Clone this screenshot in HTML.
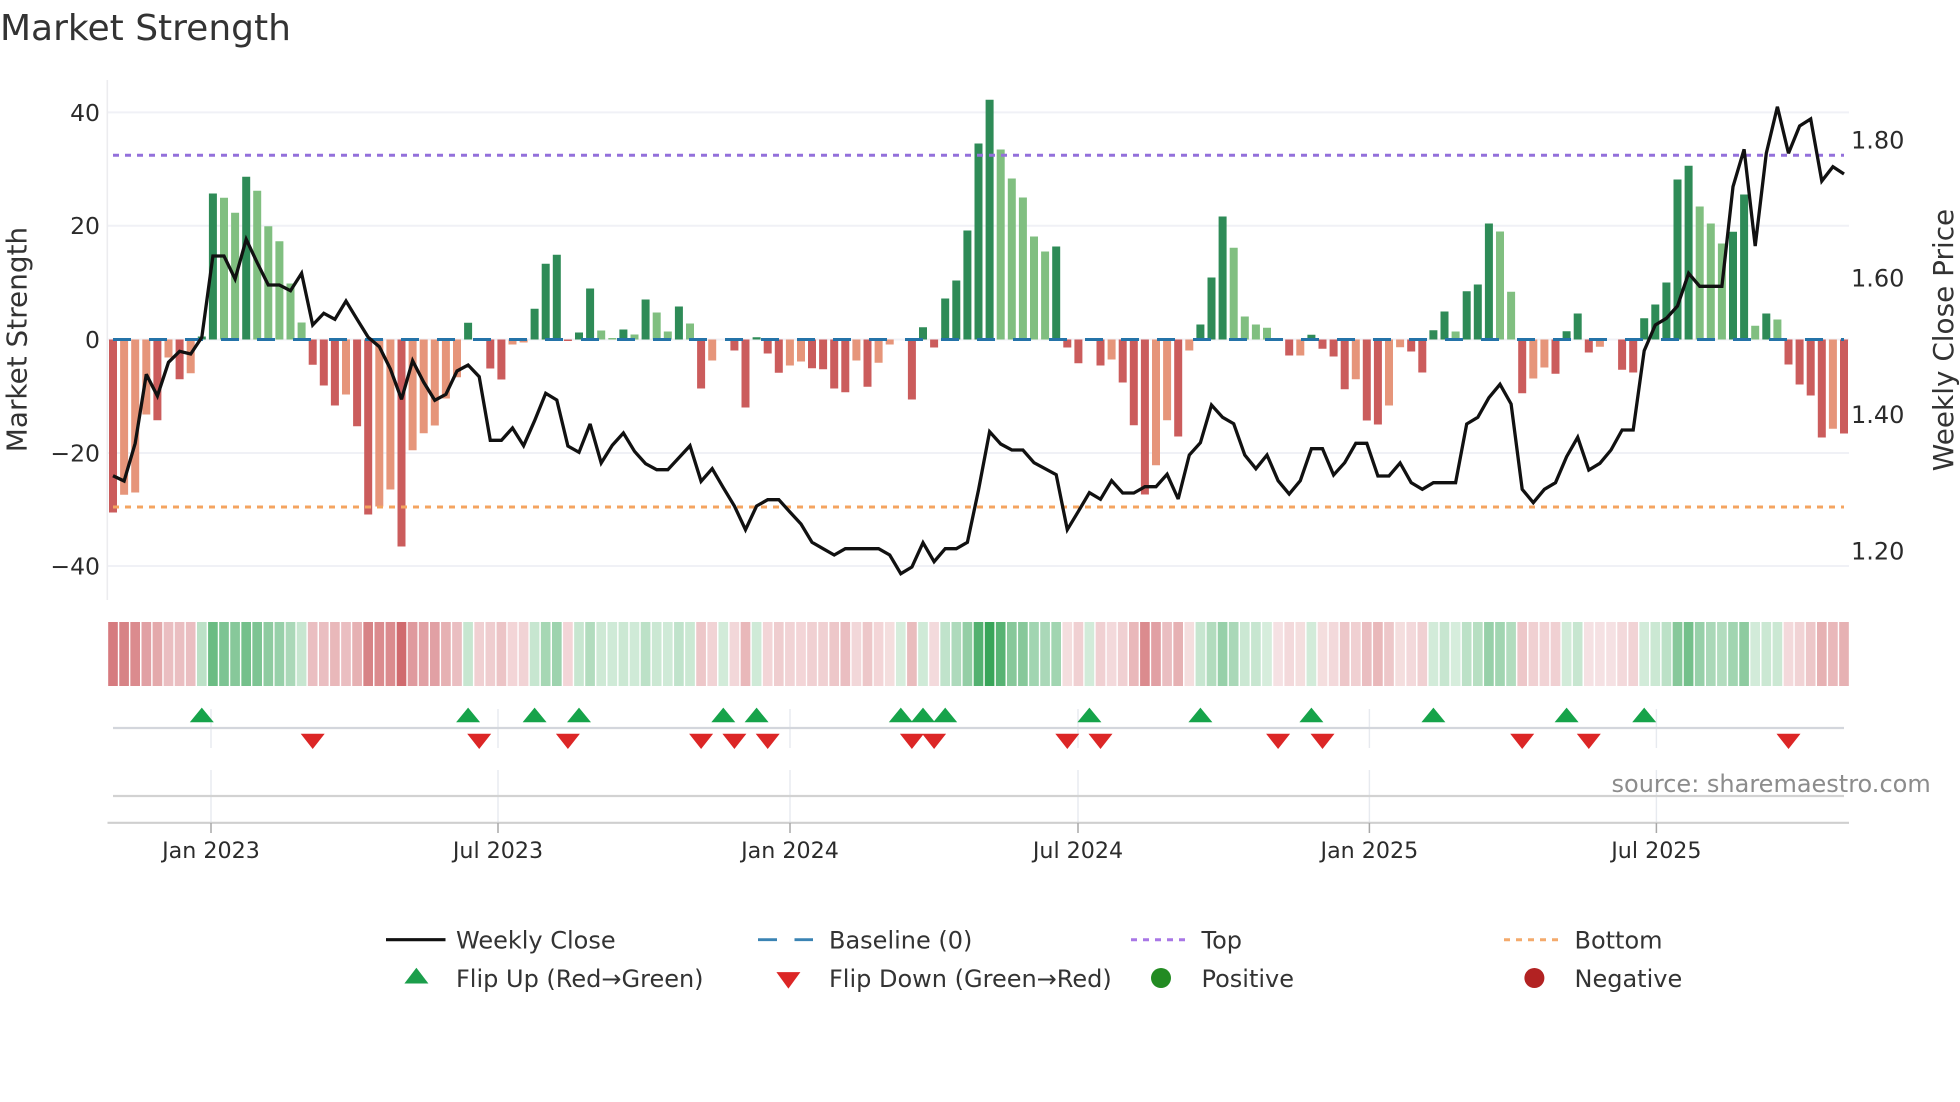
<!DOCTYPE html>
<html lang="en">
<head>
<meta charset="utf-8">
<title>Market Strength</title>
<style>
html,body{margin:0;padding:0;background:#fff;width:1960px;height:1102px;overflow:hidden}
svg{display:block}
text{font-family:"DejaVu Sans","Liberation Sans",sans-serif;fill:#2b2b2b}
.t{font-size:22.2px}
.yl{font-size:23.5px}
.yr{font-size:24px}
.l{font-size:24px;fill:#333}
.a{font-size:27.9px;fill:#333}
.g{stroke:#2da050;stroke-width:9.6;fill:none}
.r{stroke:#c85055;stroke-width:9.6;fill:none}
</style>
</head>
<body>
<svg width="1960" height="1102" viewBox="0 0 1960 1102" xmlns="http://www.w3.org/2000/svg">
<defs>
<filter id="lift" filterUnits="userSpaceOnUse" x="100" y="618" width="1760" height="72" color-interpolation-filters="sRGB">
<feComponentTransfer><feFuncA type="table" tableValues="0 .17 .27 .37 .45 .54 .62 .71 .8 .9 1"/></feComponentTransfer>
</filter>
</defs>
<rect width="1960" height="1102" fill="#fff"/>
<text x="0" y="40" style="font-size:36px;fill:#333">Market Strength</text>

<!-- grid -->
<path d="M107 112.4H1849M107 225.8H1849M107 339.5H1849M107 453H1849M107 566H1849" stroke="#f0f1f6" stroke-width="2" fill="none"/>
<path d="M107.3 80V600" stroke="#ececef" stroke-width="1.6" fill="none"/>

<!-- bars -->
<path fill="none" stroke="#2e8b57" stroke-width="8" d="M201.8 339.5v-3M212.9 339.5v-146M246.2 339.5v-162.7M468.1 339.5v-16.7M534.6 339.5v-30.7M545.7 339.5v-75.7M556.8 339.5v-84.7M579 339.5v-7M590.1 339.5v-51M623.4 339.5v-10M645.6 339.5v-40M678.9 339.5v-33M756.6 339.5v-2.3M923 339.5v-12.3M945.2 339.5v-41M956.3 339.5v-59M967.4 339.5v-109M978.5 339.5v-196M989.6 339.5v-239.7M1056.2 339.5v-93M1200.4 339.5v-15M1211.5 339.5v-62M1222.6 339.5v-123M1311.4 339.5v-4.7M1433.4 339.5v-9.3M1444.5 339.5v-28M1466.7 339.5v-48.3M1477.8 339.5v-55M1488.9 339.5v-116M1566.6 339.5v-8.3M1577.7 339.5v-26M1644.2 339.5v-21.3M1655.3 339.5v-35M1666.4 339.5v-57M1677.5 339.5v-160M1688.6 339.5v-173.7M1733 339.5v-107.7M1744.1 339.5v-145M1766.3 339.5v-26"/>
<path fill="none" stroke="#80bf80" stroke-width="8" d="M224 339.5v-141.7M235.1 339.5v-126.7M257.2 339.5v-148.7M268.3 339.5v-113.3M279.4 339.5v-98.3M290.5 339.5v-56M301.6 339.5v-17M601.2 339.5v-9M612.3 339.5v-1.5M634.5 339.5v-5M656.7 339.5v-27M667.8 339.5v-8M690 339.5v-16M1000.7 339.5v-190M1011.8 339.5v-161M1022.9 339.5v-142M1034 339.5v-103M1045.1 339.5v-88M1233.7 339.5v-91.7M1244.8 339.5v-23M1255.9 339.5v-15M1267 339.5v-11.7M1455.6 339.5v-8M1500 339.5v-108M1511.1 339.5v-47.7M1699.7 339.5v-133M1710.8 339.5v-116M1721.9 339.5v-96M1755.2 339.5v-13.7M1777.4 339.5v-20"/>
<path fill="none" stroke="#cb5c5c" stroke-width="8" d="M113 339.5v173M157.4 339.5v80.7M179.6 339.5v39.7M312.7 339.5v25.3M323.8 339.5v46M334.9 339.5v66M357.1 339.5v86.7M368.2 339.5v175M401.5 339.5v207M490.3 339.5v29M501.4 339.5v40M567.9 339.5v1.5M701.1 339.5v49M734.4 339.5v11M745.5 339.5v68M767.7 339.5v14M778.8 339.5v33.3M812 339.5v28.7M823.1 339.5v29.7M834.2 339.5v49M845.3 339.5v52.7M867.5 339.5v47.3M911.9 339.5v60M934.1 339.5v8M1067.3 339.5v8M1078.4 339.5v23.7M1100.5 339.5v26M1122.7 339.5v43M1133.8 339.5v85.7M1144.9 339.5v155M1178.2 339.5v97M1289.2 339.5v16M1322.5 339.5v9.3M1333.6 339.5v17M1344.7 339.5v49.7M1366.8 339.5v81M1377.9 339.5v85M1411.2 339.5v12M1422.3 339.5v33M1522.2 339.5v53.7M1555.5 339.5v34.3M1588.8 339.5v13M1622.1 339.5v30.3M1633.2 339.5v33M1788.5 339.5v25M1799.6 339.5v45M1810.7 339.5v56M1821.8 339.5v98M1844 339.5v94"/>
<path fill="none" stroke="#e6957a" stroke-width="8" d="M124.1 339.5v155.3M135.2 339.5v153M146.3 339.5v75M168.5 339.5v18M190.7 339.5v33.7M346 339.5v55M379.3 339.5v167M390.4 339.5v150M412.6 339.5v110.7M423.7 339.5v93.7M434.8 339.5v86M445.9 339.5v59M457 339.5v37.7M512.5 339.5v5M523.6 339.5v3M712.2 339.5v21M789.9 339.5v26M801 339.5v22M856.4 339.5v21M878.6 339.5v23.3M889.7 339.5v5M1111.6 339.5v20M1156 339.5v125.7M1167.1 339.5v80.7M1189.3 339.5v11M1300.3 339.5v16M1355.8 339.5v39.7M1389 339.5v66M1400.1 339.5v7.7M1533.3 339.5v39M1544.4 339.5v28M1599.9 339.5v7.3M1832.9 339.5v89.3"/>

<!-- reference lines -->
<path d="M113 339.5H1844" stroke="#2473a8" stroke-width="3" stroke-dasharray="18 18" fill="none"/>
<path d="M113 155.3H1844" stroke="#9370db" stroke-width="3" stroke-dasharray="6 6" fill="none"/>
<path d="M113 507H1844" stroke="#f4a460" stroke-width="3" stroke-dasharray="6 6" fill="none"/>

<!-- weekly close -->
<polyline fill="none" stroke="#111" stroke-width="3.3" stroke-linejoin="miter" stroke-miterlimit="3" points="113,475.7 124.1,481 135.2,443.3 146.3,374.3 157.4,396 168.5,362.3 179.6,351.3 190.7,354 201.8,337.3 212.9,256 224,256 235.1,279 246.2,239.3 257.2,262.7 268.3,285 279.4,285 290.5,290.7 301.6,273.3 312.7,325 323.8,313.3 334.9,319.3 346,301 357.1,319.3 368.2,337.3 379.3,346.7 390.4,369 401.5,399.3 412.6,360.7 423.7,382.3 434.8,400.3 445.9,394.3 457,371 468.1,365 479.2,376.7 490.3,440.3 501.4,440.3 512.5,428 523.6,445.7 534.6,420.7 545.7,393.3 556.8,400 567.9,446 579,452.3 590.1,424 601.2,463 612.3,445.3 623.4,433 634.5,451.3 645.6,463.7 656.7,469.7 667.8,469.7 678.9,457.7 690,445.7 701.1,481.3 712.2,468.7 723.3,487.7 734.4,506 745.5,529.7 756.6,506 767.7,499.7 778.8,499.7 789.9,512 801,524 812,542.3 823.1,548.7 834.2,555 845.3,548.7 856.4,548.7 867.5,548.7 878.6,548.7 889.7,555 900.8,573.7 911.9,567 923,542.7 934.1,561.7 945.2,548.7 956.3,548.7 967.4,542.3 978.5,490 989.6,431.7 1000.7,444 1011.8,450 1022.9,450 1034,462.7 1045.1,468.7 1056.2,474.7 1067.3,529.7 1078.4,511.3 1089.4,492.7 1100.5,499.3 1111.6,480.7 1122.7,493 1133.8,493 1144.9,486.7 1156,486.7 1167.1,474.3 1178.2,499 1189.3,455 1200.4,442.7 1211.5,405 1222.6,417.3 1233.7,423.7 1244.8,455 1255.9,468.7 1267,455 1278.1,480.7 1289.2,494 1300.3,480.7 1311.4,448.7 1322.5,448.7 1333.6,475 1344.7,462.7 1355.8,443.3 1366.8,443.3 1377.9,476 1389,476 1400.1,463 1411.2,482.7 1422.3,489.3 1433.4,482.7 1444.5,482.7 1455.6,482.7 1466.7,424 1477.8,417.3 1488.9,397.7 1500,384.3 1511.1,404 1522.2,489.3 1533.3,502.7 1544.4,489.3 1555.5,482.7 1566.6,456.7 1577.7,437.3 1588.8,470 1599.9,463.3 1611,450 1622.1,430 1633.2,430 1644.2,350.7 1655.3,325 1666.4,318.3 1677.5,306 1688.6,273.3 1699.7,286.3 1710.8,286.3 1721.9,286.3 1733,186.7 1744.1,149.3 1755.2,246 1766.3,153.3 1777.4,106.7 1788.5,153.3 1799.6,126 1810.7,119 1821.8,181 1832.9,166.7 1844,174"/>

<!-- y ticks -->
<g text-anchor="end">
<text class="yl" x="100" y="120.8">40</text>
<text class="yl" x="100" y="234">20</text>
<text class="yl" x="100" y="347.8">0</text>
<text class="yl" x="100" y="461.3">−20</text>
<text class="yl" x="100" y="574.3">−40</text>
</g>
<text class="yr" x="1851" y="148.7">1.80</text>
<text class="yr" x="1851" y="286.3">1.60</text>
<text class="yr" x="1851" y="423">1.40</text>
<text class="yr" x="1851" y="559.7">1.20</text>
<text class="a" text-anchor="middle" transform="translate(26.5 339.5) rotate(-90)">Market Strength</text>
<text class="a" text-anchor="middle" transform="translate(1953 340) rotate(-90)">Weekly Close Price</text>

<!-- heat strip -->
<g filter="url(#lift)">
<path class="r" opacity=".75" d="M113 622v64"/><path class="r" opacity=".7" d="M124.1 622v64"/><path class="r" opacity=".65" d="M135.2 622v64"/><path class="r" opacity=".5" d="M146.3 622v64"/><path class="r" opacity=".45" d="M157.4 622v64"/><path class="r" opacity=".3" d="M168.5 622v64"/><path class="r" opacity=".3" d="M179.6 622v64"/><path class="r" opacity=".3" d="M190.7 622v64"/><path class="g" opacity=".25" d="M201.8 622v64"/><path class="g" opacity=".7" d="M212.9 622v64"/>
<path class="g" opacity=".6" d="M224 622v64"/><path class="g" opacity=".55" d="M235.1 622v64"/><path class="g" opacity=".65" d="M246.2 622v64"/><path class="g" opacity=".6" d="M257.2 622v64"/><path class="g" opacity=".5" d="M268.3 622v64"/><path class="g" opacity=".45" d="M279.4 622v64"/><path class="g" opacity=".35" d="M290.5 622v64"/><path class="g" opacity=".2" d="M301.6 622v64"/><path class="r" opacity=".3" d="M312.7 622v64"/><path class="r" opacity=".3" d="M323.8 622v64"/>
<path class="r" opacity=".35" d="M334.9 622v64"/><path class="r" opacity=".3" d="M346 622v64"/><path class="r" opacity=".4" d="M357.1 622v64"/><path class="r" opacity=".7" d="M368.2 622v64"/><path class="r" opacity=".65" d="M379.3 622v64"/><path class="r" opacity=".65" d="M390.4 622v64"/><path class="r" opacity=".85" d="M401.5 622v64"/><path class="r" opacity=".55" d="M412.6 622v64"/><path class="r" opacity=".5" d="M423.7 622v64"/><path class="r" opacity=".5" d="M434.8 622v64"/>
<path class="r" opacity=".4" d="M445.9 622v64"/><path class="r" opacity=".3" d="M457 622v64"/><path class="g" opacity=".2" d="M468.1 622v64"/><path class="r" opacity=".2" d="M479.2 622v64"/><path class="r" opacity=".22" d="M490.3 622v64"/><path class="r" opacity=".27" d="M501.4 622v64"/><path class="r" opacity=".17" d="M512.5 622v64"/><path class="r" opacity=".18" d="M523.6 622v64"/><path class="g" opacity=".2" d="M534.6 622v64"/><path class="g" opacity=".37" d="M545.7 622v64"/>
<path class="g" opacity=".42" d="M556.8 622v64"/><path class="r" opacity=".17" d="M567.9 622v64"/><path class="g" opacity=".2" d="M579 622v64"/><path class="g" opacity=".3" d="M590.1 622v64"/><path class="g" opacity=".17" d="M601.2 622v64"/><path class="g" opacity=".16" d="M612.3 622v64"/><path class="g" opacity=".18" d="M623.4 622v64"/><path class="g" opacity=".16" d="M634.5 622v64"/><path class="g" opacity=".25" d="M645.6 622v64"/><path class="g" opacity=".18" d="M656.7 622v64"/>
<path class="g" opacity=".16" d="M667.8 622v64"/><path class="g" opacity=".23" d="M678.9 622v64"/><path class="g" opacity=".18" d="M690 622v64"/><path class="r" opacity=".25" d="M701.1 622v64"/><path class="r" opacity=".18" d="M712.2 622v64"/><path class="g" opacity=".15" d="M723.3 622v64"/><path class="r" opacity=".16" d="M734.4 622v64"/><path class="r" opacity=".35" d="M745.5 622v64"/><path class="g" opacity=".16" d="M756.6 622v64"/><path class="r" opacity=".17" d="M767.7 622v64"/>
<path class="r" opacity=".22" d="M778.8 622v64"/><path class="r" opacity=".18" d="M789.9 622v64"/><path class="r" opacity=".17" d="M801 622v64"/><path class="r" opacity=".2" d="M812 622v64"/><path class="r" opacity=".2" d="M823.1 622v64"/><path class="r" opacity=".25" d="M834.2 622v64"/><path class="r" opacity=".3" d="M845.3 622v64"/><path class="r" opacity=".16" d="M856.4 622v64"/><path class="r" opacity=".25" d="M867.5 622v64"/><path class="r" opacity=".17" d="M878.6 622v64"/>
<path class="r" opacity=".12" d="M889.7 622v64"/><path class="g" opacity=".13" d="M900.8 622v64"/><path class="r" opacity=".32" d="M911.9 622v64"/><path class="g" opacity=".16" d="M923 622v64"/><path class="r" opacity=".14" d="M934.1 622v64"/><path class="g" opacity=".23" d="M945.2 622v64"/><path class="g" opacity=".32" d="M956.3 622v64"/><path class="g" opacity=".47" d="M967.4 622v64"/><path class="g" opacity=".82" d="M978.5 622v64"/><path class="g" opacity=".95" d="M989.6 622v64"/>
<path class="g" opacity=".8" d="M1000.7 622v64"/><path class="g" opacity=".55" d="M1011.8 622v64"/><path class="g" opacity=".55" d="M1022.9 622v64"/><path class="g" opacity=".4" d="M1034 622v64"/><path class="g" opacity=".35" d="M1045.1 622v64"/><path class="g" opacity=".4" d="M1056.2 622v64"/><path class="r" opacity=".12" d="M1067.3 622v64"/><path class="r" opacity=".2" d="M1078.4 622v64"/><path class="g" opacity=".15" d="M1089.4 622v64"/><path class="r" opacity=".2" d="M1100.5 622v64"/>
<path class="r" opacity=".15" d="M1111.6 622v64"/><path class="r" opacity=".2" d="M1122.7 622v64"/><path class="r" opacity=".35" d="M1133.8 622v64"/><path class="r" opacity=".65" d="M1144.9 622v64"/><path class="r" opacity=".5" d="M1156 622v64"/><path class="r" opacity=".3" d="M1167.1 622v64"/><path class="r" opacity=".4" d="M1178.2 622v64"/><path class="r" opacity=".12" d="M1189.3 622v64"/><path class="g" opacity=".2" d="M1200.4 622v64"/><path class="g" opacity=".3" d="M1211.5 622v64"/>
<path class="g" opacity=".45" d="M1222.6 622v64"/><path class="g" opacity=".35" d="M1233.7 622v64"/><path class="g" opacity=".18" d="M1244.8 622v64"/><path class="g" opacity=".2" d="M1255.9 622v64"/><path class="g" opacity=".13" d="M1267 622v64"/><path class="r" opacity=".1" d="M1278.1 622v64"/><path class="r" opacity=".15" d="M1289.2 622v64"/><path class="r" opacity=".12" d="M1300.3 622v64"/><path class="g" opacity=".15" d="M1311.4 622v64"/><path class="r" opacity=".12" d="M1322.5 622v64"/>
<path class="r" opacity=".15" d="M1333.6 622v64"/><path class="r" opacity=".25" d="M1344.7 622v64"/><path class="r" opacity=".2" d="M1355.8 622v64"/><path class="r" opacity=".3" d="M1366.8 622v64"/><path class="r" opacity=".35" d="M1377.9 622v64"/><path class="r" opacity=".25" d="M1389 622v64"/><path class="r" opacity=".12" d="M1400.1 622v64"/><path class="r" opacity=".15" d="M1411.2 622v64"/><path class="r" opacity=".2" d="M1422.3 622v64"/><path class="g" opacity=".15" d="M1433.4 622v64"/>
<path class="g" opacity=".2" d="M1444.5 622v64"/><path class="g" opacity=".13" d="M1455.6 622v64"/><path class="g" opacity=".25" d="M1466.7 622v64"/><path class="g" opacity=".28" d="M1477.8 622v64"/><path class="g" opacity=".45" d="M1488.9 622v64"/><path class="g" opacity=".4" d="M1500 622v64"/><path class="g" opacity=".3" d="M1511.1 622v64"/><path class="r" opacity=".25" d="M1522.2 622v64"/><path class="r" opacity=".2" d="M1533.3 622v64"/><path class="r" opacity=".18" d="M1544.4 622v64"/>
<path class="r" opacity=".2" d="M1555.5 622v64"/><path class="g" opacity=".15" d="M1566.6 622v64"/><path class="g" opacity=".2" d="M1577.7 622v64"/><path class="r" opacity=".1" d="M1588.8 622v64"/><path class="r" opacity=".1" d="M1599.9 622v64"/><path class="r" opacity=".1" d="M1611 622v64"/><path class="r" opacity=".15" d="M1622.1 622v64"/><path class="r" opacity=".18" d="M1633.2 622v64"/><path class="g" opacity=".15" d="M1644.2 622v64"/><path class="g" opacity=".18" d="M1655.3 622v64"/>
<path class="g" opacity=".25" d="M1666.4 622v64"/><path class="g" opacity=".55" d="M1677.5 622v64"/><path class="g" opacity=".65" d="M1688.6 622v64"/><path class="g" opacity=".45" d="M1699.7 622v64"/><path class="g" opacity=".35" d="M1710.8 622v64"/><path class="g" opacity=".3" d="M1721.9 622v64"/><path class="g" opacity=".4" d="M1733 622v64"/><path class="g" opacity=".5" d="M1744.1 622v64"/><path class="g" opacity=".15" d="M1755.2 622v64"/><path class="g" opacity=".18" d="M1766.3 622v64"/>
<path class="g" opacity=".18" d="M1777.4 622v64"/><path class="r" opacity=".15" d="M1788.5 622v64"/><path class="r" opacity=".18" d="M1799.6 622v64"/><path class="r" opacity=".25" d="M1810.7 622v64"/><path class="r" opacity=".4" d="M1821.8 622v64"/><path class="r" opacity=".35" d="M1832.9 622v64"/><path class="r" opacity=".4" d="M1844 622v64"/>
</g>

<!-- flip lane grid -->
<path d="M211 709V748M498 709V748M790 709V748M1078 709V748M1369.4 709V748M1656.4 709V748M211 770V822M498 770V822M790 770V822M1078 770V822M1369.4 770V822M1656.4 770V822" stroke="#e7eaef" stroke-width="1.4" fill="none"/>
<path d="M113 728H1844" stroke="#d3d6dc" stroke-width="2.2" fill="none"/>
<path d="M113 796H1844" stroke="#d2d2d2" stroke-width="2.2" fill="none"/>
<path d="M107.5 822.8H1849" stroke="#cfcfcf" stroke-width="2.2" fill="none"/>
<path d="M211 823V833M498 823V833M790 823V833M1078 823V833M1369.4 823V833M1656.4 823V833" stroke="#a8a8a8" stroke-width="1.5" fill="none"/>

<!-- flips -->
<path fill="#16a34a" d="M201.8 707.6l12 14.7h-24zM468.1 707.6l12 14.7h-24zM534.6 707.6l12 14.7h-24zM579 707.6l12 14.7h-24zM723.3 707.6l12 14.7h-24zM756.6 707.6l12 14.7h-24zM900.8 707.6l12 14.7h-24zM923 707.6l12 14.7h-24zM945.2 707.6l12 14.7h-24zM1089.4 707.6l12 14.7h-24zM1200.4 707.6l12 14.7h-24zM1311.4 707.6l12 14.7h-24zM1433.4 707.6l12 14.7h-24zM1566.6 707.6l12 14.7h-24zM1644.2 707.6l12 14.7h-24z"/>
<path fill="#dc2626" d="M312.7 749l-12-15.2h24zM479.2 749l-12-15.2h24zM567.9 749l-12-15.2h24zM701.1 749l-12-15.2h24zM734.4 749l-12-15.2h24zM767.7 749l-12-15.2h24zM911.9 749l-12-15.2h24zM934.1 749l-12-15.2h24zM1067.3 749l-12-15.2h24zM1100.5 749l-12-15.2h24zM1278.1 749l-12-15.2h24zM1322.5 749l-12-15.2h24zM1522.2 749l-12-15.2h24zM1588.8 749l-12-15.2h24zM1788.5 749l-12-15.2h24z"/>

<!-- x labels -->
<text class="t" text-anchor="middle" x="211" y="858">Jan 2023</text>
<text class="t" text-anchor="middle" x="498" y="858">Jul 2023</text>
<text class="t" text-anchor="middle" x="790" y="858">Jan 2024</text>
<text class="t" text-anchor="middle" x="1078" y="858">Jul 2024</text>
<text class="t" text-anchor="middle" x="1369.4" y="858">Jan 2025</text>
<text class="t" text-anchor="middle" x="1656.4" y="858">Jul 2025</text>

<text x="1611.5" y="792" style="font-size:24px;fill:#8c8c8c">source: sharemaestro.com</text>

<!-- legend -->
<path d="M386 939.7H445.5" stroke="#111" stroke-width="3.2" fill="none"/>
<text class="l" x="456" y="948.5">Weekly Close</text>
<path d="M758 939.7H777M794.5 939.7H813" stroke="#3a83b3" stroke-width="2.8" fill="none"/>
<text class="l" x="829" y="948.5">Baseline (0)</text>
<path d="M1131 939.7H1186" stroke="#a877e6" stroke-width="3" stroke-dasharray="6 6" fill="none"/>
<text class="l" x="1201.5" y="948.5">Top</text>
<path d="M1504 939.7H1559" stroke="#f4aa6c" stroke-width="3" stroke-dasharray="6 6" fill="none"/>
<text class="l" x="1574.5" y="948.5">Bottom</text>

<path d="M416.4 967.8l12 15.7h-24z" fill="#1b9e4b"/>
<text class="l" x="456" y="987">Flip Up (Red→Green)</text>
<path d="M788.4 988.6l-12-16.5h24z" fill="#dc2626"/>
<text class="l" x="829" y="987">Flip Down (Green→Red)</text>
<circle cx="1161" cy="978" r="10" fill="#228b22"/>
<text class="l" x="1201.5" y="987">Positive</text>
<circle cx="1534.4" cy="978" r="10" fill="#b22222"/>
<text class="l" x="1574.5" y="987">Negative</text>
</svg>
</body>
</html>
